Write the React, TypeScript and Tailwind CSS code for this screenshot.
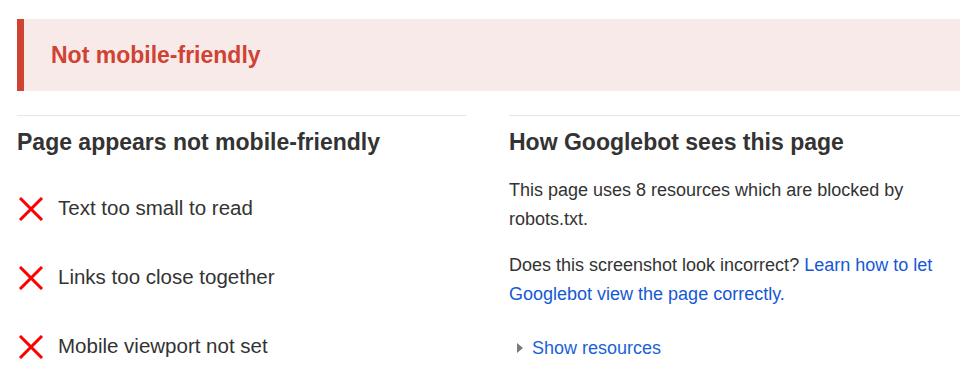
import React from "react";

const issues = [
  "Text too small to read",
  "Links too close together",
  "Mobile viewport not set",
];

const CrossIcon = () => (
  <svg width="26" height="24" viewBox="0 0 26 24" className="shrink-0">
    <path d="M2 1 L24 23 M24 1 L2 23" stroke="#ff0000" strokeWidth="3" fill="none" />
  </svg>
);

export default function App() {
  return (
    <div className="w-[960px] h-[390px] overflow-hidden bg-white pt-[19px] pl-[17px] text-[#333333] font-['Liberation_Sans',Arial,sans-serif]">
      {/* verdict banner */}
      <div className="h-[72px] w-[960px] flex items-center border-l-[7px] border-[#d04232] bg-[#f9eaea] pl-[27px]">
        <h1 className="text-[23px] font-bold text-[#d04232]">Not mobile-friendly</h1>
      </div>

      <div className="mt-[24px] flex gap-[43px]">
        {/* left column */}
        <div className="w-[449px] shrink-0 border-t border-[#e6e6e6]">
          <h2 className="mt-[12px] text-[23px] leading-[28px] font-bold">
            Page appears not mobile-friendly
          </h2>
          <ul className="mt-[18px]">
            {issues.map((issue) => (
              <li key={issue} className="h-[69px] flex items-center gap-[14px] pl-[1px]">
                <CrossIcon />
                <span className="text-[20.5px]">{issue}</span>
              </li>
            ))}
          </ul>
        </div>

        {/* right column */}
        <div className="w-[451px] shrink-0 border-t border-[#e6e6e6]">
          <h2 className="mt-[12px] text-[23px] leading-[28px] font-bold">
            How Googlebot sees this page
          </h2>
          <p className="mt-[20px] text-[18px] leading-[28.5px]">
            This page uses 8 resources which are blocked by robots.txt.
          </p>
          <p className="mt-[18px] text-[18px] leading-[28.5px]">
            Does this screenshot look incorrect?{" "}
            <a href="#" className="text-[#1558d6]">
              Learn how to let Googlebot view the page correctly.
            </a>
          </p>
          <button className="mt-[26px] flex items-center gap-[9px] pl-[8px] text-[18px] leading-[28.5px] text-[#1a62d8]">
            <svg width="6" height="10" viewBox="0 0 6 10">
              <path d="M0 0 L6 5 L0 10 Z" fill="#7a7a7a" />
            </svg>
            Show resources
          </button>
        </div>
      </div>
    </div>
  );
}
